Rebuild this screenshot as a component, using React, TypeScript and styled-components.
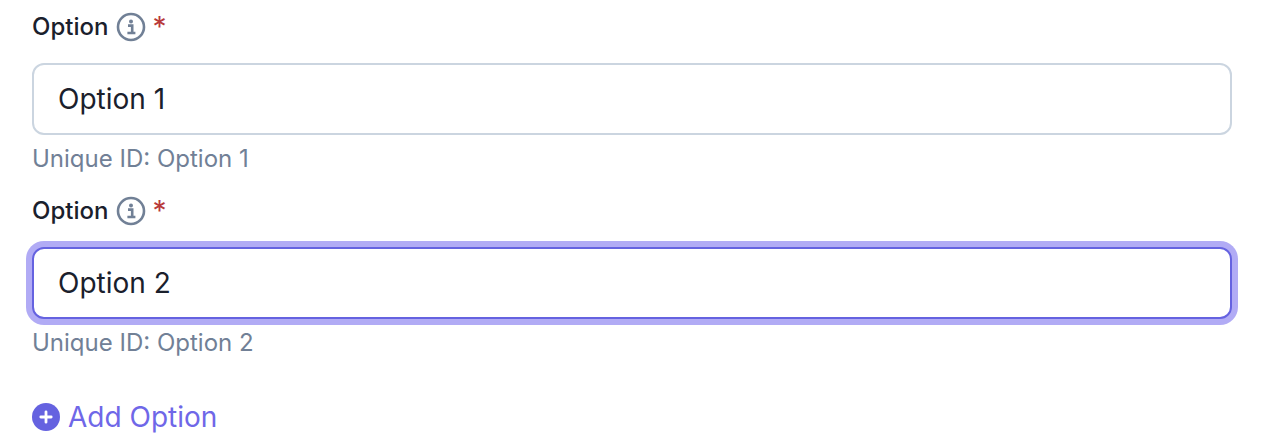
import React from 'react';
import styled, { createGlobalStyle } from 'styled-components';

const options = [
  { value: 'Option 1', focused: false },
  { value: 'Option 2', focused: true },
];

const InfoIcon: React.FC = () => (
  <svg width="30" height="30" viewBox="0 0 30 30" fill="none">
    <circle cx="15" cy="15" r="13" stroke="#718096" strokeWidth="2.6" />
    <circle cx="15" cy="9.4" r="2" fill="#718096" />
    <path d="M12 13.6h4.2v7M11.4 21h8" stroke="#718096" strokeWidth="2.6" />
  </svg>
);

const PlusIcon: React.FC = () => (
  <svg width="28" height="28" viewBox="0 0 28 28" fill="none">
    <circle cx="14" cy="14" r="14" fill="#6562E0" />
    <path d="M14 8.8v10.4M8.8 14h10.4" stroke="#FFFFFF" strokeWidth="2.8" strokeLinecap="round" />
  </svg>
);

const App: React.FC = () => (
  <>
    <GlobalStyle />
    <Page>
      {options.map((option) => (
        <Field key={option.value}>
          <LabelRow>
            <Label>Option</Label>
            <InfoIcon />
            <Required>*</Required>
          </LabelRow>
          <Input $focused={option.focused} value={option.value} readOnly />
          <Hint>Unique ID: {option.value}</Hint>
        </Field>
      ))}
      <AddButton type="button">
        <PlusIcon />
        Add Option
      </AddButton>
    </Page>
  </>
);

export default App;

const GlobalStyle = createGlobalStyle`
  html, body {
    margin: 0;
    padding: 0;
    background: #FFFFFF;
    overflow: hidden;
  }
`;

const Page = styled.div`
  width: 1200px;
  padding: 10px 0 0 32px;
  font-family: Inter, "Liberation Sans", sans-serif;
  display: flex;
  flex-direction: column;
`;

const Field = styled.div`
  display: flex;
  flex-direction: column;
  height: 184px;
`;

const LabelRow = styled.div`
  display: flex;
  align-items: center;
  height: 34px;
  margin-bottom: 19px;
`;

const Label = styled.span`
  font-size: 24px;
  font-weight: 450;
  line-height: 34px;
  color: #1A202C;
  margin-right: 8px;
`;

const Required = styled.span`
  font-size: 28px;
  font-weight: 400;
  line-height: 34px;
  color: #B83A3A;
  margin-left: 6px;
  margin-top: -1px;
`;

const Input = styled.input<{ $focused: boolean }>`
  box-sizing: border-box;
  width: 1200px;
  height: 72px;
  padding: 0 24px;
  font-family: inherit;
  font-size: 28px;
  color: #1A202C;
  background: #FFFFFF;
  border-radius: 12px;
  outline: none;
  border: 2px solid ${({ $focused }) => ($focused ? '#6562E0' : '#CBD5E0')};
  box-shadow: ${({ $focused }) => ($focused ? '0 0 0 6px #B1ABF5' : 'none')};
`;

const Hint = styled.div`
  font-size: 24px;
  line-height: 34px;
  color: #718096;
  margin-top: 7px;
`;

const AddButton = styled.button`
  display: flex;
  align-items: center;
  gap: 8px;
  width: fit-content;
  margin-top: 19px;
  padding: 0;
  height: 40px;
  border: none;
  background: none;
  font-family: inherit;
  font-size: 28px;
  color: #6F67E8;
`;
